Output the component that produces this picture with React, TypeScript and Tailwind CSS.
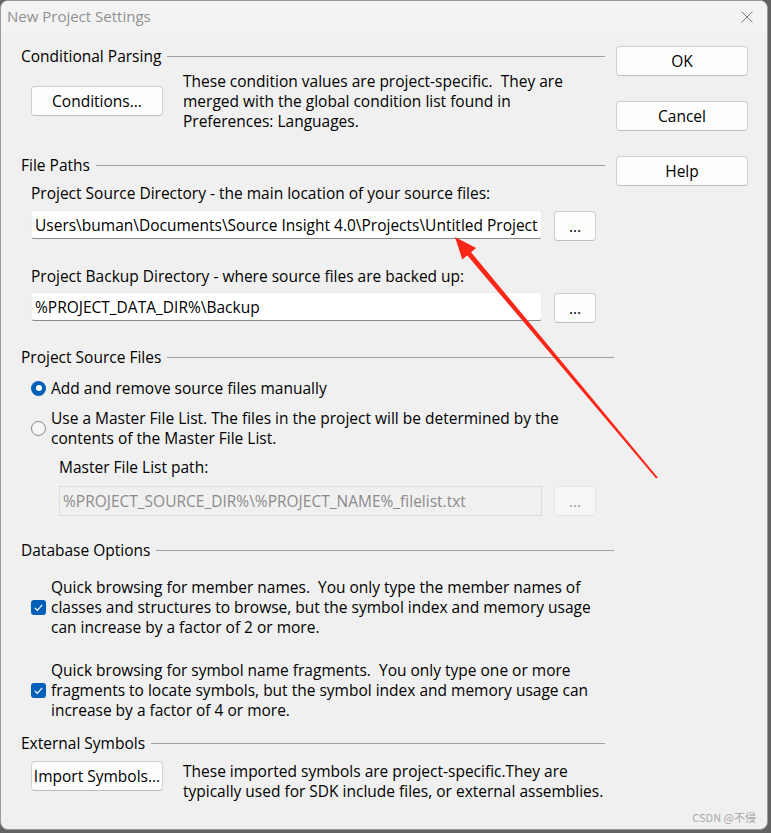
import React from "react";

const Header = ({ title, short }: { title: string; short?: boolean }) => (
  <div className={`flex h-5 items-center ${short ? "pr-[9px]" : ""}`}>
    <span className="whitespace-nowrap">{title}</span>
    <div className="ml-[6px] h-px flex-1 bg-[#a0a0a0]" />
  </div>
);

const Button = ({ label, disabled }: { label: string; disabled?: boolean }) => (
  <div
    className={
      disabled
        ? "flex h-[30px] items-center justify-center rounded-[4px] border border-[#e4e4e4] bg-[#f6f6f6] text-[#a0a0a0]"
        : "flex h-[30px] items-center justify-center rounded-[4px] border border-[#d0d0d0] border-b-[#bdbdbd] bg-[#fdfdfd] text-black"
    }
  >
    {label}
  </div>
);

const Check = () => (
  <span className="flex h-[15px] w-[15px] shrink-0 items-center justify-center rounded-[3px] bg-[#005fb8]">
    <svg width="15" height="15" viewBox="0 0 15 15">
      <path d="M3.8 7.9 L6.3 10.3 L11.2 4.9" fill="none" stroke="#fff" strokeWidth="1.2" />
    </svg>
  </span>
);

export default function App() {
  return (
    <div className="relative h-[833px] w-[771px] bg-[#626262] font-['Open_Sans','Noto_Sans',sans-serif] text-[15.5px] leading-5 text-black">
      <div className="flex h-[830px] w-[768px] flex-col overflow-hidden rounded-lg border border-[#9a9a9a] bg-[#f0f0f0]">
        {/* title bar */}
        <div className="flex h-[31px] shrink-0 items-center justify-between bg-[#f3f3f3] pl-[6px] pr-[14px]">
          <span className="-mt-px text-[15px] text-[#909090]">New Project Settings</span>
          <svg width="12" height="12" viewBox="0 0 12 12">
            <path d="M0.5 0.5 L11.5 11.5 M11.5 0.5 L0.5 11.5" stroke="#7a7a7a" strokeWidth="1" />
          </svg>
        </div>

        <div className="flex pl-[20px]">
          {/* main column */}
          <div className="flex w-[593px] flex-col">
            <div className="mt-[14px]">
              <Header title="Conditional Parsing" short />
            </div>
            <div className="mt-[5px] flex">
              <div className="ml-[10px] mt-[15px] w-[132px] shrink-0">
                <Button label="Conditions..." />
              </div>
              <p className="ml-[20px] whitespace-pre">
                {"These condition values are project-specific.  They are\nmerged with the global condition list found in\nPreferences: Languages."}
              </p>
            </div>

            <div className="mt-[24px]">
              <Header title="File Paths" short />
            </div>
            <div className="ml-[10px] mt-[8px]">Project Source Directory - the main location of your source files:</div>
            <div className="ml-[10px] mt-[7px] flex items-start">
              <div className="flex h-[29px] w-[511px] items-center rounded-[3px] border border-[#ececec] border-b-[#8a8a8a] bg-white pl-[3px] whitespace-nowrap">
                Users\buman\Documents\Source Insight 4.0\Projects\Untitled Project
              </div>
              <div className="ml-[12px] mt-px w-[42px]">
                <Button label="..." />
              </div>
            </div>
            <div className="ml-[10px] mt-[25px]">Project Backup Directory - where source files are backed up:</div>
            <div className="ml-[10px] mt-[6px] flex items-start">
              <div className="flex h-[29px] w-[511px] items-center rounded-[3px] border border-[#ececec] border-b-[#8a8a8a] bg-white pl-[3px]">
                %PROJECT_DATA_DIR%\Backup
              </div>
              <div className="ml-[12px] mt-px w-[42px]">
                <Button label="..." />
              </div>
            </div>

            <div className="mt-[24px]">
              <Header title="Project Source Files" />
            </div>
            <div className="ml-[10px] mt-[11px] flex items-center">
              <span className="flex h-[15px] w-[15px] items-center justify-center rounded-full bg-[#005fb8]">
                <span className="h-[6px] w-[6px] rounded-full bg-white" />
              </span>
              <span className="ml-[5px]">Add and remove source files manually</span>
            </div>
            <div className="ml-[10px] mt-[10px] flex items-center">
              <span className="h-[15px] w-[15px] shrink-0 rounded-full border border-[#858585] bg-[#f6f6f6]" />
              <span className="ml-[5px] whitespace-pre">
                {"Use a Master File List. The files in the project will be determined by the\ncontents of the Master File List."}
              </span>
            </div>
            <div className="ml-[38px] mt-[9px]">Master File List path:</div>
            <div className="ml-[38px] mt-[9px] flex items-start">
              <div className="flex h-[30px] w-[483px] items-center border border-[#dcdcdc] bg-[#f0f0f0] pl-[3px] text-[#8c8c8c]">
                %PROJECT_SOURCE_DIR%\%PROJECT_NAME%_filelist.txt
              </div>
              <div className="ml-[12px] w-[42px]">
                <Button label="..." disabled />
              </div>
            </div>

            <div className="mt-[24px]">
              <Header title="Database Options" />
            </div>
            <div className="ml-[10px] mt-[17px] flex items-center">
              <Check />
              <span className="ml-[5px] whitespace-pre">
                {"Quick browsing for member names.  You only type the member names of\nclasses and structures to browse, but the symbol index and memory usage\ncan increase by a factor of 2 or more."}
              </span>
            </div>
            <div className="ml-[10px] mt-[23px] flex items-center">
              <Check />
              <span className="ml-[5px] whitespace-pre">
                {"Quick browsing for symbol name fragments.  You only type one or more\nfragments to locate symbols, but the symbol index and memory usage can\nincrease by a factor of 4 or more."}
              </span>
            </div>

            <div className="mt-[13px]">
              <Header title="External Symbols" short />
            </div>
            <div className="mt-[8px] flex">
              <div className="ml-[10px] w-[132px] shrink-0">
                <Button label="Import Symbols..." />
              </div>
              <p className="ml-[20px] whitespace-pre">
                {"These imported symbols are project-specific.They are\ntypically used for SDK include files, or external assemblies."}
              </p>
            </div>
          </div>

          {/* dialog buttons */}
          <div className="ml-[2px] mt-[14px] flex w-[132px] flex-col gap-[25px]">
            <Button label="OK" />
            <Button label="Cancel" />
            <Button label="Help" />
          </div>
        </div>
      </div>

      {/* annotation arrow */}
      <svg className="pointer-events-none absolute left-0 top-0" width="771" height="833" viewBox="0 0 771 833">
        <polygon points="455,237 462.3,259.6 476.1,248" fill="#fa2618" />
        <polygon points="466,253.9 469.8,250.7 657.8,477.4 656.2,478.6" fill="#fa2618" />
      </svg>

      <span className="absolute right-[15px] top-[810px] font-['Noto_Sans_CJK_SC',sans-serif] text-[11px] leading-[14px] text-[#a8a8a8]">
        CSDN @不侵
      </span>
    </div>
  );
}
